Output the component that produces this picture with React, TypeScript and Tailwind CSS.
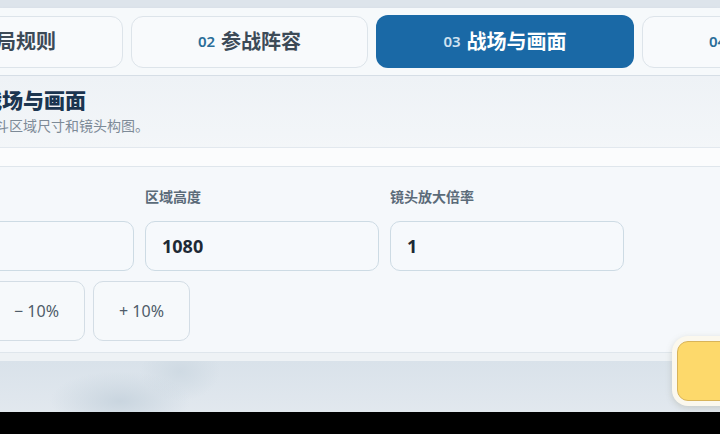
import { useState } from "react";

type Tab = { no: string; label: string; width: string };

const tabs: Tab[] = [
  { no: "01", label: "对局规则", width: "w-[237px]" },
  { no: "02", label: "参战阵容", width: "w-[237px]" },
  { no: "03", label: "战场与画面", width: "w-[258px]" },
  { no: "04", label: "出场顺序", width: "w-[237px]" },
];

const fields = [
  { label: "区域宽度", value: "1920" },
  { label: "区域高度", value: "1080" },
  { label: "镜头放大倍率", value: "1" },
];

const steps = ["− 10%", "− 10%", "+ 10%"];

const App = () => {
  const [active] = useState("03");

  return (
    <div className="w-[720px] h-[434px] overflow-hidden bg-black font-['Noto_Sans','Noto_Sans_CJK_SC',sans-serif]">
      <div className="relative h-[412px] overflow-hidden bg-[#dde4eb] pt-2">
        {/* tab bar */}
        <div className="flex h-[68px] items-center bg-[#f6f9fb] border-b border-[#d6dee6] shadow-[0_2px_4px_rgba(120,140,160,0.18)]">
          <div className="flex items-center gap-2 -ml-[114px] shrink-0">
            {tabs.map((t) => {
              const on = t.no === active;
              return (
                <div
                  key={t.no}
                  className={`${t.width} shrink-0 flex items-center justify-center gap-1.5 rounded-xl ${
                    on
                      ? "h-[53px] bg-[#1a69a6] text-white"
                      : "h-[52px] border border-[#dde4ea] bg-[#f8fafc] text-[#3c4a57]"
                  }`}
                >
                  <span className={`text-[15px] font-semibold ${on ? "text-[#cfe2f1]" : "text-[#2a6d98]"}`}>{t.no}</span>
                  <span className="text-[20px] font-bold">{t.label}</span>
                </div>
              );
            })}
          </div>
        </div>

        {/* panel */}
        <div className="bg-gradient-to-b from-[#eef2f6] via-[#f8fafb] to-[#f9fbfc]">
          <div className="pt-[10px] pb-[11px] border-b border-[#e2e8ee] -ml-[19px]">
            <h1 className="text-[21px] leading-[29px] font-black text-[#1b3550]">战场与画面</h1>
            <p className="mt-[1px] text-[14px] leading-5 text-[#7d8a97]">战斗区域尺寸和镜头构图。</p>
          </div>
          <div className="h-[18px] bg-[#fbfcfd]" />
          <div className="border-t border-b border-[#dfe6ec] bg-[#f5f8fb] pb-[11px]">
            <div className="-ml-[100px] pt-[20px] flex flex-col gap-[10px]">
              <div className="flex gap-[11px]">
                {fields.map((f) => (
                  <div key={f.label} className="w-[234px] shrink-0 flex flex-col gap-[14px]">
                    <span className="text-[14px] leading-5 font-semibold text-[#5b6b79]">{f.label}</span>
                    <div className="h-[50px] rounded-[10px] border border-[#cddbe4] bg-[#f6f9fc] flex items-center px-4">
                      <span className="text-[18px] font-bold text-[#1d2935]">{f.value}</span>
                    </div>
                  </div>
                ))}
              </div>
              <div className="flex gap-2 -ml-[17px]">
                {steps.map((s, i) => (
                  <div
                    key={i}
                    className="w-[97px] h-[60px] shrink-0 rounded-[10px] border border-[#d3dde5] bg-[#f6f9fb] flex items-center justify-center text-[16px] font-normal text-[#4f5c69]"
                  >
                    {s}
                  </div>
                ))}
              </div>
            </div>
          </div>
          <div className="h-[8px] bg-[#eef2f5]" />
        </div>

        {/* blurred backdrop */}
        <div className="h-[60px] bg-[radial-gradient(ellipse_70px_30px_at_120px_40px,#c9d5df,transparent),radial-gradient(ellipse_40px_30px_at_180px_10px,#cfdae3,transparent),linear-gradient(to_bottom,#d9e2ea,#e3e9ef)]" />

        {/* floating action */}
        <div className="absolute left-[672px] top-[336px] w-[80px] h-[70px] rounded-[16px] bg-[#fbf8ee] shadow-[0_2px_6px_rgba(120,120,90,0.25)] p-[5px]">
          <div className="w-full h-full rounded-[11px] bg-[#fdd96b] border border-[#d8b45a]" />
        </div>
      </div>
    </div>
  );
};

export default App;
